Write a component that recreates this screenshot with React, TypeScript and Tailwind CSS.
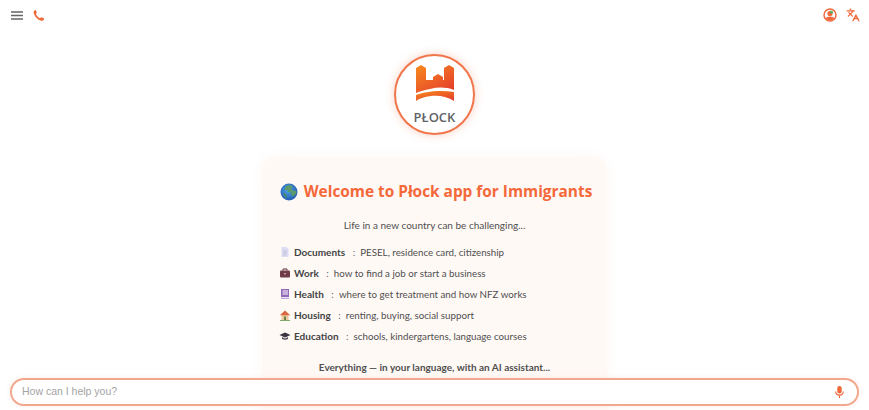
import React from "react";
import { Languages } from "lucide-react";

const Globe = () => (
  <svg width="18" height="18" viewBox="0 0 18 18" className="shrink-0">
    <defs>
      <radialGradient id="g" cx="0.45" cy="0.4" r="0.7">
        <stop offset="0" stopColor="#4fa3e8" />
        <stop offset="1" stopColor="#1d4fa8" />
      </radialGradient>
    </defs>
    <circle cx="9" cy="9" r="8.5" fill="url(#g)" />
    <path d="M6 3 9.500 2l3.500 1.500L11 6l2 2 3-.5.5 2.500-3 3.500-2-1V10L8 9 7 7 4.500 7Z" fill="#5d9a6a" />
    <path d="M3 10l3 1 1 4-2-1Z" fill="#4d8a5f" />
  </svg>
);
const Doc = () => (
  <svg width="12" height="12" viewBox="0 0 12 12">
    <path d="M2.500 1h5l2 2v8h-7Z" fill="#dcdcf2" />
    <path d="M4 5h4M4 7h4M4 9h3" stroke="#b6b6d8" strokeWidth=".7" />
  </svg>
);
const Case = () => (
  <svg width="12" height="12" viewBox="0 0 12 12">
    <path d="M4 3.500V2h4v1.500" fill="none" stroke="#5a3038" />
    <rect x="1" y="3.500" width="10" height="7" rx="1" fill="#6f3c48" />
    <rect x="5" y="6" width="2" height="1.400" fill="#c9a3a3" />
  </svg>
);
const Book = () => (
  <svg width="12" height="12" viewBox="0 0 12 12">
    <rect x="2" y="1" width="8" height="10" fill="#8f68b8" />
    <rect x="3.500" y="2" width="5.500" height="5" fill="#c9b1de" />
    <rect x="2" y="9" width="8" height="1.500" fill="#ece4f4" />
  </svg>
);
const House = () => (
  <svg width="12" height="12" viewBox="0 0 12 12">
    <rect x="2.500" y="5.500" width="7" height="5.500" fill="#e8c9a0" />
    <path d="M.8 6.200 6 1.500l5.200 4.700Z" fill="#d9663f" />
    <rect x="5" y="7.500" width="2" height="3.500" fill="#6f7f4a" />
    <path d="M1 11h10v1H1Z" fill="#7fa86a" />
  </svg>
);
const Cap = () => (
  <svg width="12" height="12" viewBox="0 0 12 12">
    <path d="M.5 5 6 2.500 11.500 5 6 7.500Z" fill="#3a3540" />
    <path d="M3 7v2c1.500 1 4.500 1 6 0V7L6 8.400Z" fill="#55505c" />
  </svg>
);

const Profile = () => (
  <svg width="14" height="14" viewBox="0 0 14 14">
    <circle cx="7" cy="7" r="6" fill="#fff" stroke="#f0683a" strokeWidth="1.400" />
    <circle cx="7" cy="5.600" r="2.600" fill="#f0683a" />
    <path d="M2.600 10.200C4.500 8.300 9.500 8.300 11.400 10.200 9.500 12.800 4.500 12.800 2.600 10.200Z" fill="#f0683a" />
    <path d="M7 2.600 10.200 3.600 9.400 6 7 5Z" fill="#5bae5b" />
  </svg>
);

const Logo = () => (
  <svg width="38" height="36" viewBox="0 0 38 36" className="shrink-0">
    <defs>
      <linearGradient id="lg" x1="0" y1="0" x2="0.8" y2="1">
        <stop offset="0" stopColor="#f78a1e" />
        <stop offset="1" stopColor="#e5402c" />
      </linearGradient>
    </defs>
    <path d="M0 3 5 0 10 3V15H17V12L22 9 27 12V15H28V3L33 0 38 3V25C30 22 22 22 14 24 9 25 4 26 0 28Z" fill="url(#lg)" />
    <path d="M0 30C8 26.500 24 24.500 38 27V36C32 32 24 30 15 31 8 32 3 33.500 0 36Z" fill="url(#lg)" />
  </svg>
);

const rows: [React.ReactNode, string, string][] = [
  [<Doc />, "Documents", "PESEL, residence card, citizenship"],
  [<Case />, "Work", "how to find a job or start a business"],
  [<Book />, "Health", "where to get treatment and how NFZ works"],
  [<House />, "Housing", "renting, buying, social support"],
  [<Cap />, "Education", "schools, kindergartens, language courses"],
];

export default function App() {
  return (
    <div className="relative h-[410px] w-full overflow-hidden bg-white font-['Lato',sans-serif] text-[#4a4a4a]">
      <header className="flex h-[30px] items-center justify-between pl-[11px] pr-[9px]">
        <div className="flex items-center gap-[9px]">
          <svg width="12" height="9" viewBox="0 0 12 9">
            <path d="M0 1h12M0 4.500h12M0 8h12" stroke="#666" strokeWidth="1.400" />
          </svg>
          <svg width="13" height="13" viewBox="0 0 13 13">
            <path d="M2.500 1.500C1.500 2 1.400 3.500 2 5c1.200 3 3.500 5.400 6.500 6.500 1.500.5 2.800.2 3.300-.8l.2-1.400L9.300 8.200 8 9.200C6.200 8.400 4.600 6.800 3.800 5l1-1.200L3.800 1Z" fill="#f0683a" />
          </svg>
        </div>
        <div className="flex items-center gap-[9px]">
          <Profile />
          <Languages size={14} className="text-[#f0683a]" strokeWidth={2.2} />
        </div>
      </header>

      <div className="mt-[24px] flex justify-center">
        <div className="flex h-[81px] w-[81px] flex-col items-center rounded-full border-2 border-[#f0764c] bg-white pt-[9px] shadow-[0_0_10px_rgba(240,104,58,0.3)]">
          <Logo />
          <span className="mt-[8px] font-['Open_Sans',sans-serif] text-[13px] leading-[16px] font-semibold text-[#5f6468]">PŁOCK</span>
        </div>
      </div>

      <div className="mx-auto mt-[22px] h-[300px] w-[345px] rounded-[14px] bg-[#fff9f6] px-[17px] pt-[25px] shadow-[0_0_14px_rgba(240,104,58,0.05)]">
        <div className="flex items-center justify-center gap-[6px] pl-[3px]">
          <Globe />
          <h1 className="font-['Open_Sans',sans-serif] text-[15.4px] leading-[20px] font-bold whitespace-nowrap text-[#f4683a]">Welcome to Płock app for Immigrants</h1>
        </div>
        <p className="mt-[15px] text-center text-[10px] leading-[16px] text-[#4f4f4f]">Life in a new country can be challenging...</p>
        <ul className="mt-[11px] flex flex-col gap-[5px]">
          {rows.map(([icon, title, text]) => (
            <li key={title} className="flex h-[16px] items-center text-[10px] leading-[16px] whitespace-nowrap">
              <span className="flex w-[15px] shrink-0 items-center">{icon}</span>
              <b className="font-bold text-[#444]">{title}</b>
              <span className="mx-[5px] text-[#666]">&nbsp;:</span>
              <span className="text-[9.75px] text-[#4f4f4f]">{text}</span>
            </li>
          ))}
        </ul>
        <p className="mt-[15px] text-center text-[10px] leading-[16px] font-bold text-[#4f4f4f]">Everything — in your language, with an AI assistant...</p>
      </div>

      <div className="absolute right-[10px] bottom-[4px] left-[10px] flex h-[28px] items-center rounded-full border-2 border-[#f2a88e] bg-white pr-[13px] pl-[10px] shadow-[0_0_5px_rgba(240,104,58,0.12)]">
        <span className="flex-1 font-['Liberation_Sans',sans-serif] text-[10.5px] text-[#a3a3a3]">How can I help you?</span>
        <svg width="9" height="12" viewBox="0 0 9 12">
          <rect x="2.300" y="0" width="4.400" height="7.500" rx="2.200" fill="#f0683a" />
          <path d="M.7 5.500c0 2.200 1.600 3.600 3.800 3.600s3.800-1.400 3.800-3.600M4.500 9v3" fill="none" stroke="#f0683a" strokeWidth="1.100" />
        </svg>
      </div>
    </div>
  );
}
